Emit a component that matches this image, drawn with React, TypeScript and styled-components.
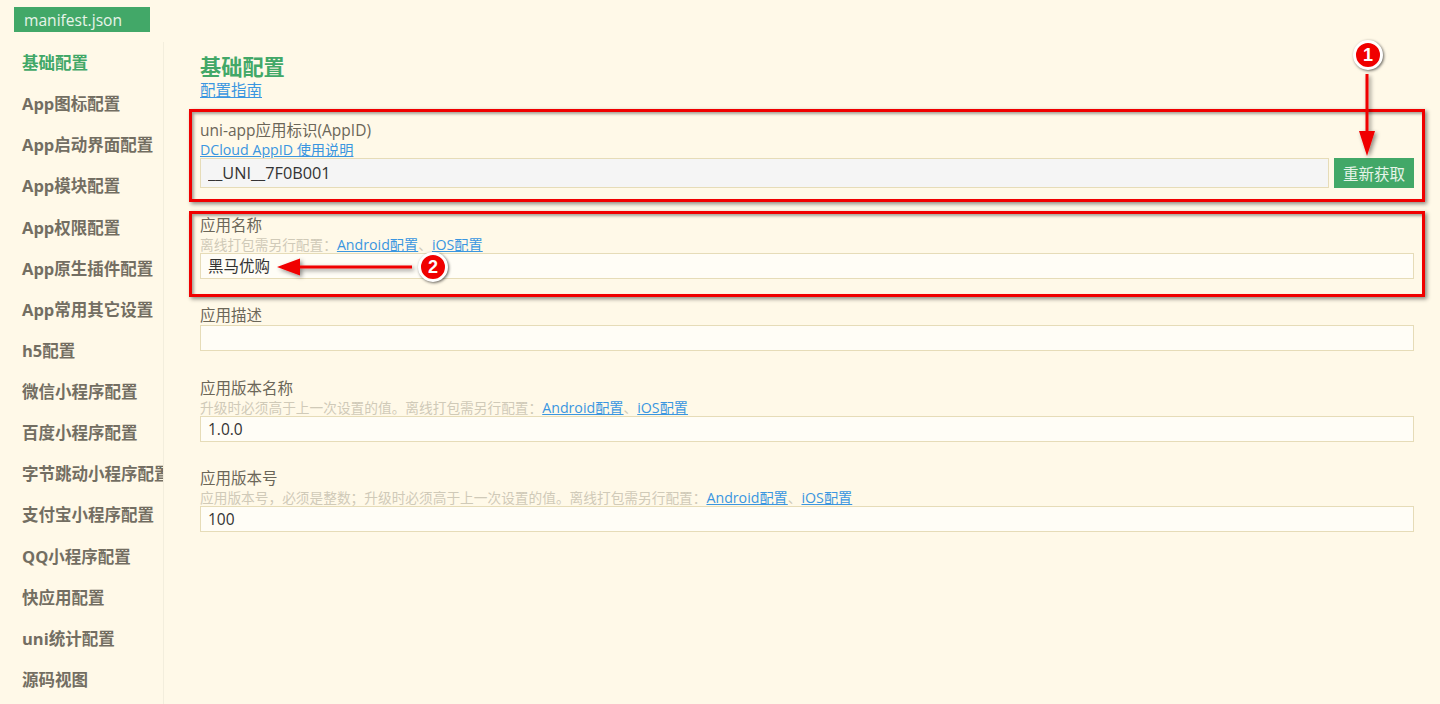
import React from 'react';
import styled, { createGlobalStyle } from 'styled-components';

const FONT = '"Open Sans", "Noto Sans CJK SC", sans-serif';
const GREEN = '#42a868';
const LINK = '#3a96e0';

const GlobalStyle = createGlobalStyle`
  html, body { margin: 0; padding: 0; height: 100%; overflow: hidden; background: #fff9e8; }
  body { font-family: ${FONT}; color: #6b6658; }
  * { box-sizing: border-box; }
`;

const Page = styled.div`
  position: relative;
  width: 1440px;
  height: 704px;
  overflow: hidden;
  background: #fff9e8;
`;

const TabBar = styled.div`
  height: 42px;
  padding: 7px 0 0 14px;
`;

const Tab = styled.div`
  width: 136px;
  height: 25px;
  padding-left: 10px;
  background: ${GREEN};
  color: #e6f4e9;
  font-size: 15.6px;
  line-height: 26px;
`;

const Body = styled.div`
  display: flex;
  height: 662px;
`;

const Sidebar = styled.nav`
  flex: none;
  width: 164px;
  border-right: 1px solid #f3eedd;
  overflow: hidden;
`;

const NavItem = styled.div<{ $active?: boolean }>`
  height: 41.13px;
  padding-left: 22px;
  font-size: 16.5px;
  font-weight: 700;
  line-height: 41px;
  white-space: nowrap;
  color: ${(p) => (p.$active ? GREEN : '#736e62')};
`;

const Main = styled.main`
  flex: 1;
  padding: 11px 26px 0 36px;
`;

const Title = styled.h1`
  margin: 0;
  font-size: 21.2px;
  font-weight: 700;
  line-height: 28px;
  color: ${GREEN};
`;

const GuideLink = styled.a`
  display: block;
  font-size: 15.5px;
  line-height: 18px;
  color: ${LINK};
  text-decoration: underline;
`;

const Fields = styled.div`
  display: flex;
  flex-direction: column;
  gap: 26.5px;
  margin-top: 21px;
`;

const Field = styled.section``;

const Label = styled.div`
  font-size: 15.5px;
  line-height: 20px;
  color: #6b6658;
`;

const Hint = styled.div`
  margin-top: 2px;
  font-size: 13.7px;
  line-height: 16px;
  color: #d0cab8;
  white-space: nowrap;
`;

const HintLink = styled.a`
  font-size: 14.2px;
  color: ${LINK};
  text-decoration: underline;
`;

const InputRow = styled.div`
  display: flex;
  gap: 5px;
`;

const Input = styled.input<{ $tall?: boolean; $muted?: boolean }>`
  flex: 1;
  min-width: 0;
  height: ${(p) => (p.$tall ? 30 : 26)}px;
  padding: 0 7px;
  border: 1px solid #e6dcb8;
  border-radius: 0;
  outline: none;
  background: ${(p) => (p.$muted ? '#f5f5f5' : '#fffdf6')};
  color: #333;
  font-family: ${FONT};
  font-size: ${(p) => (p.$tall ? 16.3 : 15.5)}px;
`;

const ActionButton = styled.button`
  flex: none;
  width: 80px;
  height: 30px;
  padding: 0;
  border: none;
  background: ${GREEN};
  color: #e6f4e9;
  font-family: ${FONT};
  font-size: 15.5px;
`;

const RedBox = styled.div<{ $top: number; $height: number }>`
  position: absolute;
  left: 189px;
  top: ${(p) => p.$top}px;
  width: 1236px;
  height: ${(p) => p.$height}px;
  border: 3px solid #f00000;
  box-shadow: 2px 2px 4px rgba(0, 0, 0, 0.45), inset 2px 2px 3px rgba(0, 0, 0, 0.35);
  pointer-events: none;
`;

const Arrows = styled.svg`
  position: absolute;
  inset: 0;
  width: 1440px;
  height: 704px;
  pointer-events: none;
`;

const Marker = styled.div<{ $x: number; $y: number }>`
  position: absolute;
  left: ${(p) => p.$x - 15}px;
  top: ${(p) => p.$y - 15}px;
  width: 30px;
  height: 30px;
  border: 3px solid #fff;
  border-radius: 50%;
  background: #f00000;
  box-shadow: 1px 1px 3px rgba(0, 0, 0, 0.6);
  color: #fff;
  font-family: "Liberation Sans", sans-serif;
  font-size: 18px;
  font-weight: 700;
  line-height: 24px;
  text-align: center;
`;

const navItems = [
  '基础配置',
  'App图标配置',
  'App启动界面配置',
  'App模块配置',
  'App权限配置',
  'App原生插件配置',
  'App常用其它设置',
  'h5配置',
  '微信小程序配置',
  '百度小程序配置',
  '字节跳动小程序配置',
  '支付宝小程序配置',
  'QQ小程序配置',
  '快应用配置',
  'uni统计配置',
  '源码视图',
];

const ConfigLinks = () => (
  <>
    <HintLink>Android配置</HintLink>
    、
    <HintLink>iOS配置</HintLink>
  </>
);

export default function App() {
  return (
    <Page>
      <GlobalStyle />
      <TabBar>
        <Tab>manifest.json</Tab>
      </TabBar>
      <Body>
        <Sidebar>
          {navItems.map((item, i) => (
            <NavItem key={item} $active={i === 0}>{item}</NavItem>
          ))}
        </Sidebar>
        <Main>
          <Title>基础配置</Title>
          <GuideLink>配置指南</GuideLink>
          <Fields>
            <Field>
              <Label>uni-app应用标识(AppID)</Label>
              <Hint><HintLink>DCloud AppID 使用说明</HintLink></Hint>
              <InputRow>
                <Input $tall $muted readOnly value="__UNI__7F0B001" />
                <ActionButton>重新获取</ActionButton>
              </InputRow>
            </Field>
            <Field>
              <Label>应用名称</Label>
              <Hint>离线打包需另行配置：<ConfigLinks /></Hint>
              <InputRow>
                <Input readOnly value="黑马优购" />
              </InputRow>
            </Field>
            <Field>
              <Label>应用描述</Label>
              <InputRow>
                <Input readOnly value="" />
              </InputRow>
            </Field>
            <Field>
              <Label>应用版本名称</Label>
              <Hint>升级时必须高于上一次设置的值。离线打包需另行配置：<ConfigLinks /></Hint>
              <InputRow>
                <Input readOnly value="1.0.0" />
              </InputRow>
            </Field>
            <Field>
              <Label>应用版本号</Label>
              <Hint>应用版本号，必须是整数；升级时必须高于上一次设置的值。离线打包需另行配置：<ConfigLinks /></Hint>
              <InputRow>
                <Input readOnly value="100" />
              </InputRow>
            </Field>
          </Fields>
        </Main>
      </Body>

      <RedBox $top={109} $height={93} />
      <RedBox $top={211} $height={86} />
      <Arrows viewBox="0 0 1440 704">
        <defs>
          <filter id="arrow-shadow" x="-30%" y="-30%" width="160%" height="160%">
            <feDropShadow dx="2" dy="2" stdDeviation="2" floodColor="#000" floodOpacity="0.45" />
          </filter>
        </defs>
        <g fill="#f00000" filter="url(#arrow-shadow)">
          <path d="M1365.500 74h3v57h6.500l-8 25-8-25h6.500z" />
          <path d="M412 265.500v3h-112v7l-23-8.500 23-8.500v7z" />
        </g>
      </Arrows>
      <Marker $x={1368} $y={55}>1</Marker>
      <Marker $x={433} $y={267}>2</Marker>
    </Page>
  );
}
